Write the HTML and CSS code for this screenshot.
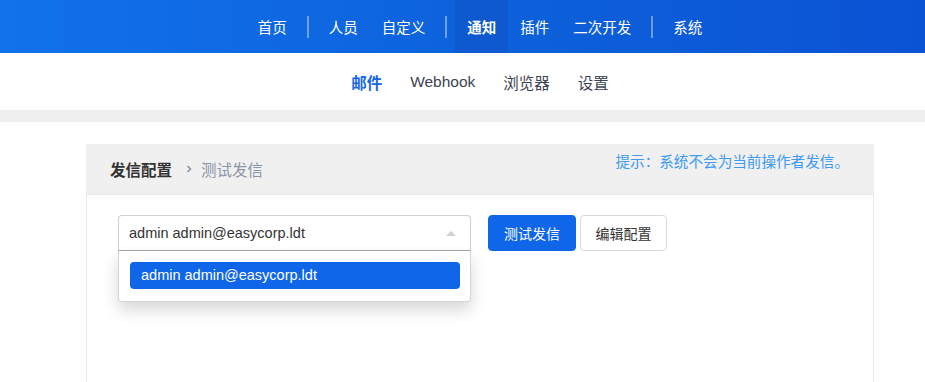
FILE: index.html
```html
<!DOCTYPE html>
<html lang="zh-CN">
<head>
    <meta charset="UTF-8">
    <meta name="viewport" content="width=device-width, initial-scale=1.0">
    <title>通知 - 邮件</title>
    <link rel="stylesheet" href="styles.css">
</head>
<body>
    <div class="page">
        <nav class="main-nav">
            <a class="nav-item">首页</a>
            <span class="nav-sep"></span>
            <a class="nav-item">人员</a>
            <a class="nav-item">自定义</a>
            <span class="nav-sep"></span>
            <a class="nav-item active">通知</a>
            <a class="nav-item">插件</a>
            <a class="nav-item">二次开发</a>
            <span class="nav-sep"></span>
            <a class="nav-item">系统</a>
        </nav>

        <nav class="sub-nav">
            <a class="sub-item active">邮件</a>
            <a class="sub-item latin">Webhook</a>
            <a class="sub-item">浏览器</a>
            <a class="sub-item">设置</a>
        </nav>

        <div class="strip"></div>

        <main class="panel">
            <div class="panel-header">
                <span class="panel-title">发信配置</span>
                <span class="crumb-arrow">
                    <svg width="8" height="10" viewBox="0 0 8 10" fill="none" stroke="#8a94a6" stroke-width="1.6">
                        <polyline points="2.5 2 5.5 5 2.5 8"></polyline>
                    </svg>
                </span>
                <span class="crumb">测试发信</span>
                <span class="hint">提示：系统不会为当前操作者发信。</span>
            </div>

            <div class="panel-body">
                <div class="picker">
                    <div class="select">
                        <span class="select-value">admin admin@easycorp.ldt</span>
                        <span class="caret"></span>
                    </div>
                    <div class="dropdown">
                        <div class="option selected">admin admin@easycorp.ldt</div>
                    </div>
                </div>
                <button class="btn btn-primary">测试发信</button>
                <button class="btn btn-default">编辑配置</button>
            </div>
        </main>
    </div>
</body>
</html>
```

FILE: styles.css
```css
* {
    margin: 0;
    padding: 0;
    box-sizing: border-box;
}

html, body {
    overflow: hidden;
}

body {
    background: #ffffff;
    color: #333333;
    font-family: "Liberation Sans", "Noto Sans CJK SC", sans-serif;
    font-size: 14px;
}

.page {
    width: 960px;
}

/* top navigation */
.main-nav {
    display: flex;
    align-items: center;
    justify-content: center;
    height: 53px;
    background: linear-gradient(90deg, #1172eb 0%, #0d5ed9 60%, #0b52d4 100%);
}

.nav-item {
    display: flex;
    align-items: center;
    height: 100%;
    padding: 0 12px;
    color: #ffffff;
    font-size: 14.5px;
    font-family: "Noto Sans CJK SC", sans-serif;
}

.nav-item.active {
    background: #0e59cf;
    font-weight: 700;
}

.nav-sep {
    width: 2px;
    height: 22px;
    margin: 0 8px;
    background: rgba(255, 255, 255, 0.4);
}

/* second level navigation */
.sub-nav {
    display: flex;
    align-items: center;
    justify-content: center;
    height: 57px;
    background: #ffffff;
}

.sub-item {
    padding: 0 14px;
    color: #3c4353;
    font-size: 15.5px;
    font-family: "Noto Sans CJK SC", sans-serif;
}

.sub-item.latin {
    font-family: "Liberation Sans", sans-serif;
}

.sub-item.active {
    color: #1566e6;
    font-weight: 700;
}

.strip {
    height: 12px;
    background: #efefef;
}

/* panel */
.panel {
    margin: 22px 86px 0;
}

.panel-header {
    display: flex;
    align-items: center;
    height: 51px;
    padding: 0 25px 0 24px;
    background: #f0f0f0;
    border-bottom: 1px solid #e6e6e6;
}

.panel-title {
    font-family: "Noto Sans CJK SC", sans-serif;
    font-size: 15.5px;
    font-weight: 700;
    color: #333333;
}

.crumb-arrow {
    display: flex;
    margin: 0 8px 0 13px;
}

.crumb {
    font-family: "Noto Sans CJK SC", sans-serif;
    font-size: 15.5px;
    color: #8c95a6;
}

.hint {
    margin-left: auto;
    align-self: flex-start;
    padding-top: 6px;
    font-family: "Noto Sans CJK SC", sans-serif;
    font-size: 14.6px;
    color: #3d9bf2;
}

.panel-body {
    display: flex;
    align-items: flex-start;
    min-height: 240px;
    padding: 20px 31px;
    border-left: 1px solid #ebebeb;
    border-right: 1px solid #ebebeb;
}

/* select with open dropdown */
.picker {
    position: relative;
    width: 353px;
}

.select {
    display: flex;
    align-items: center;
    height: 36px;
    padding: 0 10px;
    border: 1px solid #cfcfcf;
    border-bottom-color: #a8a8a8;
    border-radius: 4px 4px 0 0;
    background: #ffffff;
}

.select-value {
    flex: 1;
    font-size: 14.5px;
    color: #333333;
}

.caret {
    width: 0;
    height: 0;
    margin-right: 4px;
    border-left: 5px solid transparent;
    border-right: 5px solid transparent;
    border-bottom: 5px solid #cfcfd4;
}

.dropdown {
    position: absolute;
    top: 36px;
    left: 0;
    right: 0;
    padding: 11px 10px 12px 11px;
    background: #ffffff;
    border: 1px solid #d6d6d6;
    border-top: none;
    border-radius: 0 0 4px 4px;
    box-shadow: 0 8px 16px rgba(0, 0, 0, 0.16);
}

.option {
    height: 27px;
    line-height: 27px;
    padding: 0 11px;
    border-radius: 4px;
    font-size: 14.5px;
}

.option.selected {
    background: #0f66e9;
    color: #ffffff;
}

/* buttons */
.btn {
    height: 36px;
    border-radius: 4px;
    font-family: "Noto Sans CJK SC", sans-serif;
    font-size: 14px;
    cursor: pointer;
}

.btn-primary {
    width: 88px;
    margin-left: 17px;
    background: #0f66e9;
    border: 1px solid #0f66e9;
    color: #ffffff;
}

.btn-default {
    width: 87px;
    margin-left: 4px;
    background: #ffffff;
    border: 1px solid #d5d9e0;
    color: #333333;
}
```
